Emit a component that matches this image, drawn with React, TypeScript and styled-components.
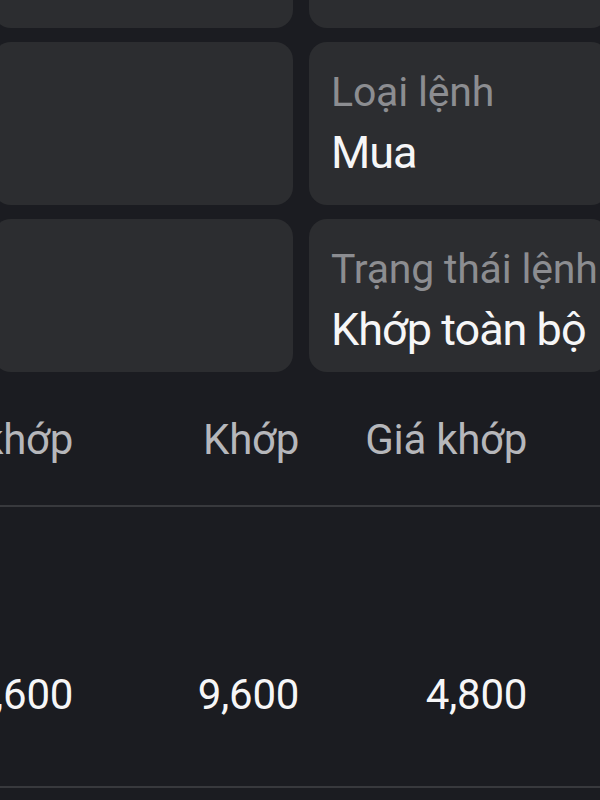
import styled, { createGlobalStyle } from 'styled-components';

const GlobalStyle = createGlobalStyle`
    html, body {
        margin: 0;
        padding: 0;
        background: #1b1c21;
        overflow: hidden;
    }
    body {
        font-family: Roboto, "Noto Sans", "Liberation Sans", sans-serif;
    }
`

const Screen = styled.div`
    width: 600px;
    height: 800px;
    overflow: hidden;
    background: #1b1c21;
`

const CardGrid = styled.div`
    display: grid;
    grid-template-columns: 300px 300px;
    grid-template-rows: 150px 163px 153px;
    column-gap: 16px;
    row-gap: 14px;
    margin: -122px 0 0 -7px;
`

const Card = styled.div`
    background: #2c2d30;
    border-radius: 18px;
    padding: 26px 0 0 22px;
    display: flex;
    flex-direction: column;
    gap: 12px;
    white-space: nowrap;
    overflow: hidden;
`

const Label = styled.div`
    color: #8c8d91;
    font-size: 41px;
    line-height: 48px;
    letter-spacing: -0.2px;
`

const Value = styled.div`
    color: #f6f6f7;
    font-size: 45px;
    line-height: 50px;
    letter-spacing: -1px;
`

const TableRow = styled.div<{ $header?: boolean }>`
    display: grid;
    grid-template-columns: 200px 226px 228px;
    align-items: center;
    margin-left: -127px;
    height: ${p => (p.$header ? '135px' : '281px')};
    border-bottom: 2px solid #38393d;
    box-sizing: border-box;
    padding-top: ${p => (p.$header ? '2px' : '96px')};
    color: ${p => (p.$header ? '#b6b7bb' : '#f6f6f7')};
    font-size: 42px;
    letter-spacing: -0.3px;
    white-space: nowrap;
`

const Cell = styled.div`
    text-align: right;
`

const cards = [
    { label: '', value: '' },
    { label: '', value: '' },
    { label: '', value: '' },
    { label: 'Loại lệnh', value: 'Mua' },
    { label: '', value: '' },
    { label: 'Trạng thái lệnh', value: 'Khớp toàn bộ' },
]

export default function App() {
    return (
        <Screen>
            <GlobalStyle />
            <CardGrid>
                {cards.map((c, i) => (
                    <Card key={i}>
                        {c.label && <Label>{c.label}</Label>}
                        {c.value && <Value>{c.value}</Value>}
                    </Card>
                ))}
            </CardGrid>
            <TableRow $header>
                <Cell>KL khớp</Cell>
                <Cell>Khớp</Cell>
                <Cell>Giá khớp</Cell>
            </TableRow>
            <TableRow>
                <Cell>9,600</Cell>
                <Cell>9,600</Cell>
                <Cell>4,800</Cell>
            </TableRow>
        </Screen>
    )
}
